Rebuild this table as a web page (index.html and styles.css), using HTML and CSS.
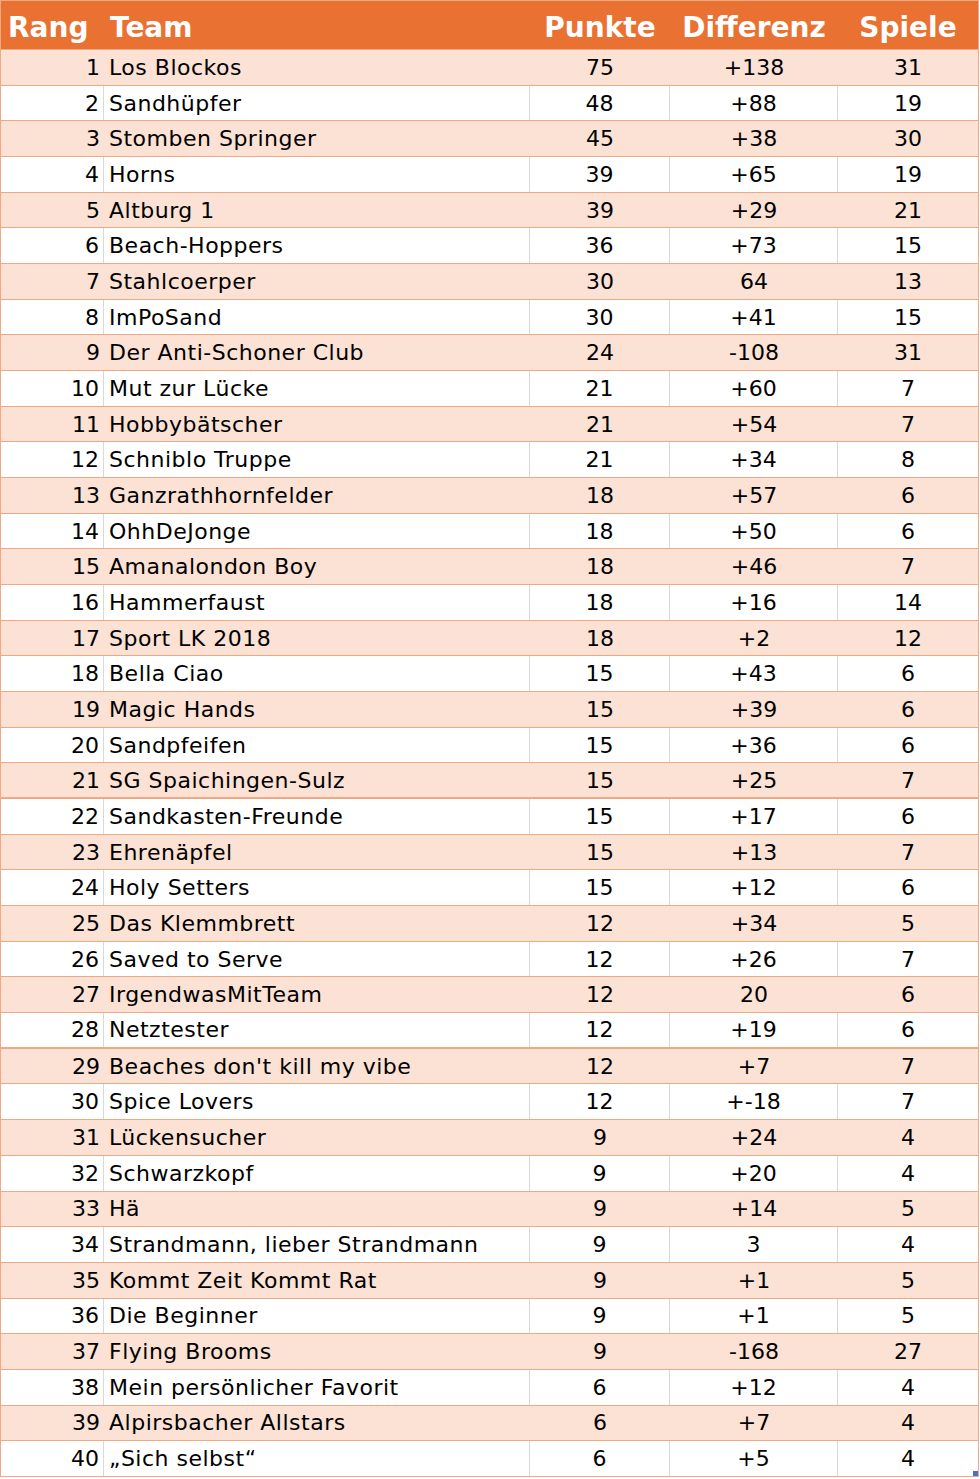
FILE: index.html
```html
<!DOCTYPE html>
<html lang="de">
<head>
<meta charset="utf-8">
<title>Tabelle</title>
<link rel="stylesheet" href="styles.css">
</head>
<body>
<div class="table">
  <div class="row head">
    <div class="c rank">Rang</div><div class="c team">Team</div><div class="c num">Punkte</div><div class="c num">Differenz</div><div class="c num">Spiele</div>
  </div>
  <div class="row odd"><div class="c rank">1</div><div class="c team">Los Blockos</div><div class="c num">75</div><div class="c num">+138</div><div class="c num">31</div></div>
  <div class="row even"><div class="c rank">2</div><div class="c team">Sandhüpfer</div><div class="c num">48</div><div class="c num">+88</div><div class="c num">19</div></div>
  <div class="row odd"><div class="c rank">3</div><div class="c team">Stomben Springer</div><div class="c num">45</div><div class="c num">+38</div><div class="c num">30</div></div>
  <div class="row even"><div class="c rank">4</div><div class="c team">Horns</div><div class="c num">39</div><div class="c num">+65</div><div class="c num">19</div></div>
  <div class="row odd"><div class="c rank">5</div><div class="c team">Altburg 1</div><div class="c num">39</div><div class="c num">+29</div><div class="c num">21</div></div>
  <div class="row even"><div class="c rank">6</div><div class="c team">Beach-Hoppers</div><div class="c num">36</div><div class="c num">+73</div><div class="c num">15</div></div>
  <div class="row odd"><div class="c rank">7</div><div class="c team">Stahlcoerper</div><div class="c num">30</div><div class="c num">64</div><div class="c num">13</div></div>
  <div class="row even"><div class="c rank">8</div><div class="c team">ImPoSand</div><div class="c num">30</div><div class="c num">+41</div><div class="c num">15</div></div>
  <div class="row odd"><div class="c rank">9</div><div class="c team">Der Anti-Schoner Club</div><div class="c num">24</div><div class="c num">-108</div><div class="c num">31</div></div>
  <div class="row even"><div class="c rank">10</div><div class="c team">Mut zur Lücke</div><div class="c num">21</div><div class="c num">+60</div><div class="c num">7</div></div>
  <div class="row odd"><div class="c rank">11</div><div class="c team">Hobbybätscher</div><div class="c num">21</div><div class="c num">+54</div><div class="c num">7</div></div>
  <div class="row even"><div class="c rank">12</div><div class="c team">Schniblo Truppe</div><div class="c num">21</div><div class="c num">+34</div><div class="c num">8</div></div>
  <div class="row odd"><div class="c rank">13</div><div class="c team">Ganzrathhornfelder</div><div class="c num">18</div><div class="c num">+57</div><div class="c num">6</div></div>
  <div class="row even"><div class="c rank">14</div><div class="c team">OhhDeJonge</div><div class="c num">18</div><div class="c num">+50</div><div class="c num">6</div></div>
  <div class="row odd"><div class="c rank">15</div><div class="c team">Amanalondon Boy</div><div class="c num">18</div><div class="c num">+46</div><div class="c num">7</div></div>
  <div class="row even"><div class="c rank">16</div><div class="c team">Hammerfaust</div><div class="c num">18</div><div class="c num">+16</div><div class="c num">14</div></div>
  <div class="row odd"><div class="c rank">17</div><div class="c team">Sport LK 2018</div><div class="c num">18</div><div class="c num">+2</div><div class="c num">12</div></div>
  <div class="row even"><div class="c rank">18</div><div class="c team">Bella Ciao</div><div class="c num">15</div><div class="c num">+43</div><div class="c num">6</div></div>
  <div class="row odd"><div class="c rank">19</div><div class="c team">Magic Hands</div><div class="c num">15</div><div class="c num">+39</div><div class="c num">6</div></div>
  <div class="row even"><div class="c rank">20</div><div class="c team">Sandpfeifen</div><div class="c num">15</div><div class="c num">+36</div><div class="c num">6</div></div>
  <div class="row odd thick"><div class="c rank">21</div><div class="c team">SG Spaichingen-Sulz</div><div class="c num">15</div><div class="c num">+25</div><div class="c num">7</div></div>
  <div class="row even"><div class="c rank">22</div><div class="c team">Sandkasten-Freunde</div><div class="c num">15</div><div class="c num">+17</div><div class="c num">6</div></div>
  <div class="row odd"><div class="c rank">23</div><div class="c team">Ehrenäpfel</div><div class="c num">15</div><div class="c num">+13</div><div class="c num">7</div></div>
  <div class="row even"><div class="c rank">24</div><div class="c team">Holy Setters</div><div class="c num">15</div><div class="c num">+12</div><div class="c num">6</div></div>
  <div class="row odd"><div class="c rank">25</div><div class="c team">Das Klemmbrett</div><div class="c num">12</div><div class="c num">+34</div><div class="c num">5</div></div>
  <div class="row even"><div class="c rank">26</div><div class="c team">Saved to Serve</div><div class="c num">12</div><div class="c num">+26</div><div class="c num">7</div></div>
  <div class="row odd"><div class="c rank">27</div><div class="c team">IrgendwasMitTeam</div><div class="c num">12</div><div class="c num">20</div><div class="c num">6</div></div>
  <div class="row even thick"><div class="c rank">28</div><div class="c team">Netztester</div><div class="c num">12</div><div class="c num">+19</div><div class="c num">6</div></div>
  <div class="row odd"><div class="c rank">29</div><div class="c team">Beaches don't kill my vibe</div><div class="c num">12</div><div class="c num">+7</div><div class="c num">7</div></div>
  <div class="row even"><div class="c rank">30</div><div class="c team">Spice Lovers</div><div class="c num">12</div><div class="c num">+-18</div><div class="c num">7</div></div>
  <div class="row odd"><div class="c rank">31</div><div class="c team">Lückensucher</div><div class="c num">9</div><div class="c num">+24</div><div class="c num">4</div></div>
  <div class="row even"><div class="c rank">32</div><div class="c team">Schwarzkopf</div><div class="c num">9</div><div class="c num">+20</div><div class="c num">4</div></div>
  <div class="row odd"><div class="c rank">33</div><div class="c team">Hä</div><div class="c num">9</div><div class="c num">+14</div><div class="c num">5</div></div>
  <div class="row even"><div class="c rank">34</div><div class="c team">Strandmann, lieber Strandmann</div><div class="c num">9</div><div class="c num">3</div><div class="c num">4</div></div>
  <div class="row odd"><div class="c rank">35</div><div class="c team">Kommt Zeit Kommt Rat</div><div class="c num">9</div><div class="c num">+1</div><div class="c num">5</div></div>
  <div class="row even"><div class="c rank">36</div><div class="c team">Die Beginner</div><div class="c num">9</div><div class="c num">+1</div><div class="c num">5</div></div>
  <div class="row odd"><div class="c rank">37</div><div class="c team">Flying Brooms</div><div class="c num">9</div><div class="c num">-168</div><div class="c num">27</div></div>
  <div class="row even"><div class="c rank">38</div><div class="c team">Mein persönlicher Favorit</div><div class="c num">6</div><div class="c num">+12</div><div class="c num">4</div></div>
  <div class="row odd"><div class="c rank">39</div><div class="c team">Alpirsbacher Allstars</div><div class="c num">6</div><div class="c num">+7</div><div class="c num">4</div></div>
  <div class="row even"><div class="c rank">40</div><div class="c team">„Sich selbst“</div><div class="c num">6</div><div class="c num">+5</div><div class="c num">4</div></div>
  <div class="handle"></div>
</div>
</body>
</html>
```

FILE: styles.css
```css
:root {
  --accent: #E97132;
  --light: #FBE2D5;
  --line: #F1A983;
  --grid: #D9D9D9;
}
html, body {
  margin: 0;
  padding: 0;
  background: #ffffff;
}
body {
  font-family: "DejaVu Sans", "Liberation Sans", sans-serif;
  color: #000;
}
.table {
  position: relative;
  width: 979px;
  box-sizing: border-box;
  border-left: 1px solid var(--line);
  border-right: 1px solid var(--line);
}
.row {
  display: grid;
  grid-template-columns: 103px 426px 140px 168px 140px;
  box-sizing: border-box;
  height: 35.675px;
  border-bottom: 1px solid var(--line);
  font-size: 22px;
}
.row.thick {
  border-bottom-width: 2px;
}
.row.head {
  height: 50px;
  border-top: 1px solid var(--line);
  background: var(--accent);
  color: #fff;
  font-weight: bold;
  font-size: 28px;
}
.row.odd {
  background: var(--light);
}
.c {
  display: flex;
  align-items: center;
  box-sizing: border-box;
  white-space: nowrap;
  overflow: hidden;
}
.row.even .c {
  border-right: 1px solid var(--grid);
}
.row.even .c:last-child {
  border-right: none;
}
.rank {
  justify-content: flex-end;
  padding-right: 4px;
}
.team {
  padding-left: 5px;
  letter-spacing: 0.5px;
}
.num {
  justify-content: center;
}
.head .c {
  padding-top: 4px;
}
.head .rank {
  justify-content: flex-start;
  padding-left: 7px;
  padding-right: 0;
}
.head .team {
  padding-left: 6px;
  letter-spacing: 0;
}
.handle {
  position: absolute;
  right: 0;
  bottom: 1px;
  width: 5px;
  height: 5px;
  background: #4472C4;
}
```
